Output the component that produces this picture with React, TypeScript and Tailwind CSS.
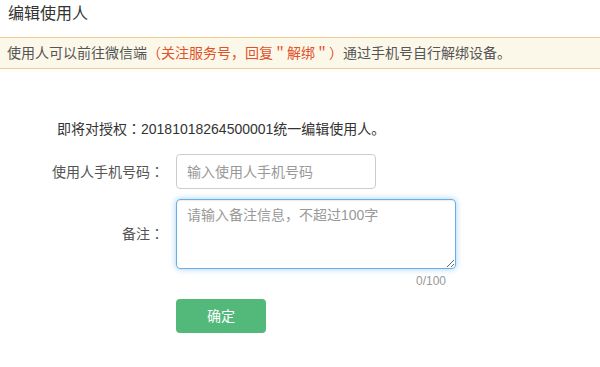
import { useState } from "react";

const FONT = "font-['Liberation_Sans','Noto_Sans_CJK_SC',sans-serif]";

// centred full-width colon, as the reference font draws it
function Colon() {
  return <span className="font-['Noto_Sans_CJK_TC',sans-serif] leading-none">：</span>;
}

export default function App() {
  const [phone, setPhone] = useState("");
  const [remark, setRemark] = useState("");

  return (
    <div className={`min-h-[367px] w-[600px] bg-white text-[#333] ${FONT}`}>
      <div className="h-[37px] px-2 pt-[3px] text-[16px] leading-[22px] text-[#333]">编辑使用人</div>

      <div className="flex h-[32px] items-center border-y border-[#f3cd8f] bg-[#fcf8e9] px-[7px] text-[14px] text-[#555]">
        使用人可以前往微信端
        <span className="text-[#e0502a]">（关注服务号，回复＂解绑＂）</span>
        通过手机号自行解绑设备。
      </div>

      <div className="pt-[50px] text-[14px]">
        <div className="h-[20px] pl-[57px] leading-[20px] text-[#333]">
          即将对授权<Colon />20181018264500001统一编辑使用人。
        </div>

        <div className="mt-[15px] flex h-[35px] items-center">
          <label className="w-[165px] pr-[1px] text-right leading-[20px] text-[#555]">
            使用人手机号码<Colon />
          </label>
          <input
            value={phone}
            onChange={(e) => setPhone(e.target.value)}
            placeholder="输入使用人手机号码"
            className="ml-[11px] h-[35px] w-[200px] rounded-[4px] border border-[#ccc] px-[10px] text-[14px] outline-none placeholder:text-[#999]"
          />
        </div>

        <div className="mt-[10px] flex h-[70px] items-center">
          <label className="w-[165px] pr-[1px] text-right leading-[20px] text-[#555]">
            备注<Colon />
          </label>
          <textarea
            value={remark}
            onChange={(e) => setRemark(e.target.value)}
            placeholder="请输入备注信息，不超过100字"
            className="ml-[11px] h-[70px] w-[280px] rounded-[4px] border border-[#66afe9] px-[10px] py-[5px] text-[14px] leading-[20px] shadow-[inset_0_1px_1px_rgba(0,0,0,.075),0_0_6px_rgba(102,175,233,.6)] outline-none placeholder:text-[#999]"
          />
        </div>

        <div className="w-[446px] pt-[4px] text-right text-[12px] leading-[16px] text-[#999]">{remark.length}/100</div>

        <div className="mt-[10px] pl-[176px]">
          <button type="button" className="h-[34px] w-[90px] rounded-[4px] bg-[#52b97b] text-[14px] text-white">
            确定
          </button>
        </div>
      </div>
    </div>
  );
}
